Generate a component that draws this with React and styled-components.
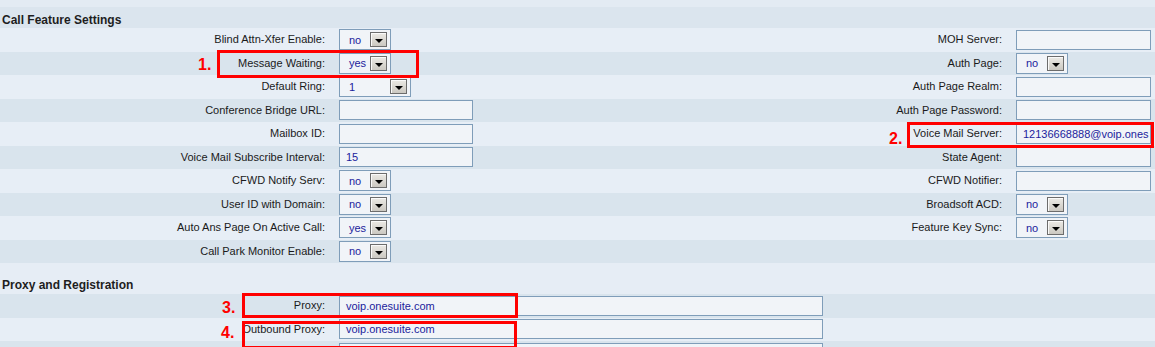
import styled, { createGlobalStyle } from 'styled-components'

const GlobalStyle = createGlobalStyle`
  html, body { margin: 0; padding: 0; background: #e6edf5; }
  body {
    font-family: "Liberation Sans", Arial, sans-serif;
    font-size: 11px;
    color: #1a1a1a;
  }
`

const Page = styled.div`
  position: relative;
  width: 1155px;
  height: 347px;
  overflow: hidden;
  background: #e6edf5;
`

const SectionHead = styled.div`
  height: ${p => p.$h}px;
  box-sizing: border-box;
  display: flex;
  align-items: flex-end;
  padding: 0 0 ${p => p.$pb}px 2px;
  background: ${p => (p.$dark ? 'linear-gradient(#e3ebf3 0 7px, #dbe5ee 7px)' : '#e6edf5')};
  font-weight: bold;
  font-size: 12px;
  line-height: 14px;
  color: #1e1e1e;
`

const Row = styled.div`
  display: grid;
  grid-template-columns: 339px 338px 339px 1fr;
  align-items: center;
  height: 23.5px;
  background: ${p => (p.$dark ? '#d9e4ed' : '#e7eef6')};
`

const Label = styled.div`
  text-align: right;
  padding-right: 14px;
  white-space: nowrap;
  line-height: 13px;
`

const Cell = styled.div`
  display: flex;
  align-items: center;
  grid-column: ${p => (p.$wide ? '2 / -1' : 'auto')};
`

const TextBox = styled.div`
  width: ${p => p.$w}px;
  height: 20px;
  box-sizing: border-box;
  border: 1px solid #7f9db9;
  background: #f1f4f8;
  color: #1c1c9c;
  padding-left: 6px;
  display: flex;
  align-items: center;
  white-space: nowrap;
  overflow: hidden;
`

const SelectBox = styled.div`
  width: ${p => p.$w}px;
  height: 21px;
  box-sizing: border-box;
  border: 1px solid #7f9db9;
  background: #f1f4f8;
  color: #1c1c9c;
  display: flex;
  align-items: center;
  justify-content: space-between;
  padding: 0 3px 0 9px;
`

const Arrow = styled.span`
  width: 17px;
  height: 15px;
  box-sizing: border-box;
  border: 1px solid #6c6c6c;
  background: linear-gradient(#eceae5, #cbc8c1);
  box-shadow: inset 1px 1px 0 #fafafa;
  display: flex;
  align-items: center;
  justify-content: center;
  padding-top: 3px;
  &::after {
    content: '';
    border-left: 4px solid transparent;
    border-right: 4px solid transparent;
    border-top: 4px solid #000;
  }
`

const Mark = styled.div`
  position: absolute;
  left: ${p => p.$x}px;
  top: ${p => p.$y}px;
  width: ${p => p.$w}px;
  height: ${p => p.$h}px;
  box-sizing: border-box;
  border: 3px solid #f00;
  pointer-events: none;
`

const Num = styled.div`
  position: absolute;
  left: ${p => p.$x}px;
  top: ${p => p.$y}px;
  color: #f00;
  font-weight: bold;
  font-size: 16px;
  line-height: 16px;
`

function Control({ c }) {
  if (!c) return <Cell />
  if (c.sel) {
    return (
      <Cell>
        <SelectBox $w={c.w || 52}>
          <span>{c.sel}</span>
          <Arrow />
        </SelectBox>
      </Cell>
    )
  }
  return (
    <Cell $wide={c.wide}>
      <TextBox $w={c.w || 134}>{c.val}</TextBox>
    </Cell>
  )
}

const CALL_ROWS = [
  ['Blind Attn-Xfer Enable:', { sel: 'no' }, 'MOH Server:', { w: 135 }],
  ['Message Waiting:', { sel: 'yes' }, 'Auth Page:', { sel: 'no' }],
  ['Default Ring:', { sel: '1', w: 72 }, 'Auth Page Realm:', { w: 135 }],
  ['Conference Bridge URL:', {}, 'Auth Page Password:', { w: 135 }],
  ['Mailbox ID:', {}, 'Voice Mail Server:', { w: 135, val: '12136668888@voip.ones' }],
  ['Voice Mail Subscribe Interval:', { val: '15' }, 'State Agent:', { w: 135 }],
  ['CFWD Notify Serv:', { sel: 'no' }, 'CFWD Notifier:', { w: 135 }],
  ['User ID with Domain:', { sel: 'no' }, 'Broadsoft ACD:', { sel: 'no' }],
  ['Auto Ans Page On Active Call:', { sel: 'yes' }, 'Feature Key Sync:', { sel: 'no' }],
  ['Call Park Monitor Enable:', { sel: 'no' }, '', null],
]

const PROXY_ROWS = [
  ['Proxy:', { wide: true, w: 484, val: 'voip.onesuite.com' }],
  ['Outbound Proxy:', { wide: true, w: 484, val: 'voip.onesuite.com' }],
  ['', { wide: true, w: 484 }],
]

export default function App() {
  return (
    <Page>
      <GlobalStyle />
      <SectionHead $dark $h={28} $pb={1}>Call Feature Settings</SectionHead>
      {CALL_ROWS.map(([l1, c1, l2, c2], i) => (
        <Row key={l1} $dark={i % 2 === 1}>
          <Label>{l1}</Label>
          <Control c={c1} />
          <Label>{l2}</Label>
          <Control c={c2} />
        </Row>
      ))}
      <SectionHead $h={31} $pb={2}>Proxy and Registration</SectionHead>
      {PROXY_ROWS.map(([l, c], i) => (
        <Row key={i} $dark={i % 2 === 0}>
          <Label>{l}</Label>
          <Control c={c} />
        </Row>
      ))}

      <Num $x={198} $y={57}>1.</Num>
      <Mark $x={217} $y={50} $w={202} $h={28} />
      <Num $x={889} $y={131}>2.</Num>
      <Mark $x={907} $y={122} $w={247} $h={26} />
      <Num $x={222} $y={300}>3.</Num>
      <Mark $x={242} $y={293} $w={276} $h={25} />
      <Num $x={221} $y={325}>4.</Num>
      <Mark $x={242} $y={321} $w={275} $h={28} />
    </Page>
  )
}
